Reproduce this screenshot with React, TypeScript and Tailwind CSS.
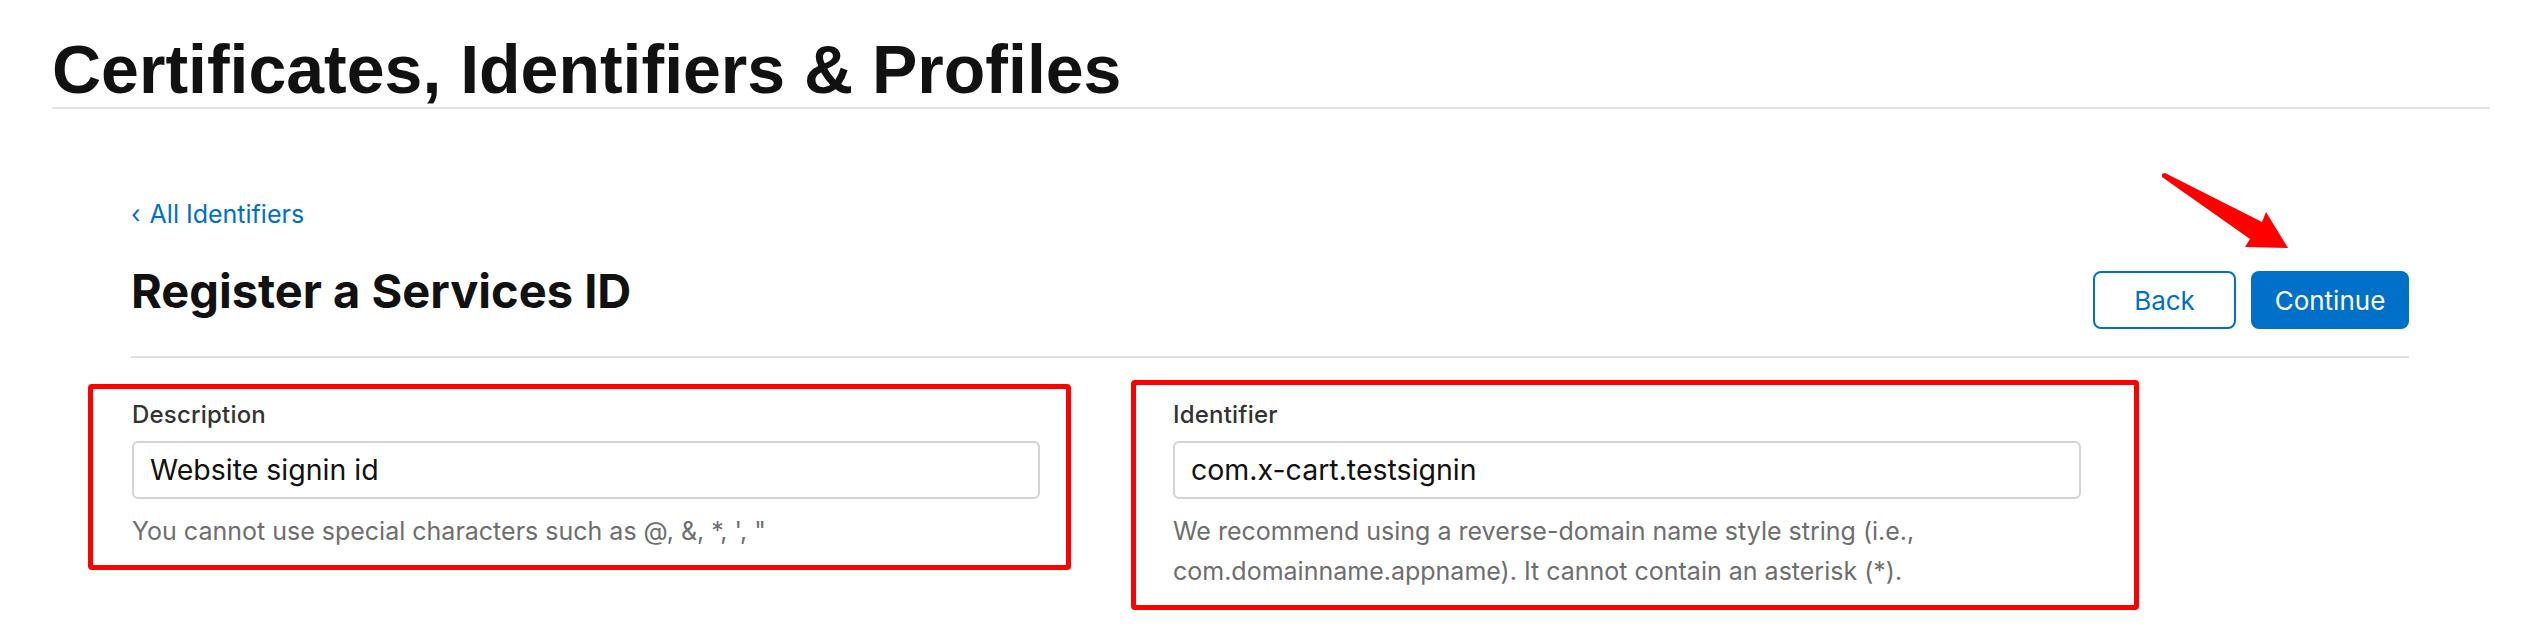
export default function App() {
  return (
    <div className="relative w-[2538px] h-[644px] overflow-hidden bg-white text-[#111111] font-['Inter','Liberation_Sans',sans-serif]">
      <header className="pl-[52px] pr-[48px] pt-[35px]">
        <h1 className="font-['Liberation_Sans',Arial,sans-serif] text-[68px] leading-[68px] font-bold text-[#111111]">
          Certificates, Identifiers &amp; Profiles
        </h1>
        <div className="mt-[4px] h-[2px] bg-[#e3e3e3]" />
      </header>

      <main className="pl-[131px] pr-[129px]">
        <a href="#" className="mt-[93px] flex items-center gap-[9px] text-[25px] leading-[25px] text-[#0070c9]">
          <span>‹</span>
          <span>All Identifiers</span>
        </a>

        <div className="mt-[40px] flex items-start justify-between">
          <h2 className="text-[47px] leading-[47px] font-bold text-[#111111]">Register a Services ID</h2>
          <div className="mt-[4px] flex gap-[15px]">
            <button className="w-[143px] h-[58px] rounded-[8px] border-2 border-[#0070c9] bg-white text-[26px] text-[#0070c9]">
              Back
            </button>
            <button className="w-[158px] h-[58px] rounded-[8px] bg-[#0070c9] text-[26px] text-white">
              Continue
            </button>
          </div>
        </div>

        <div className="mt-[27px] h-[2px] bg-[#e0e0e0]" />

        <div className="mt-[45px] pl-[1px] flex items-start gap-[133px]">
          <Field
            label="Description"
            value="Website signin id"
            help={["You cannot use special characters such as @, &, *, ', \""]}
            box="left-[-44px] right-[-31px] top-[-19px] bottom-[-19px]"
          />
          <Field
            label="Identifier"
            value="com.x-cart.testsignin"
            help={[
              "We recommend using a reverse-domain name style string (i.e.,",
              "com.domainname.appname). It cannot contain an asterisk (*).",
            ]}
            box="left-[-42px] right-[-58px] top-[-23px] bottom-[-19px]"
          />
        </div>
      </main>

      {/* annotation arrow */}
      <svg className="pointer-events-none absolute inset-0" width="2538" height="644" viewBox="0 0 2538 644">
        <polygon
          points="2162,174 2165,173 2262,222 2266,212 2288,248 2245,247 2250,239 2162,177"
          fill="#ff0000"
        />
      </svg>
    </div>
  );
}

function Field({ label, value, help, box }: { label: string; value: string; help: string[]; box: string }) {
  return (
    <div className="relative w-[908px]">
      <div className="text-[24px] leading-[24px] font-medium tracking-[0.2px] text-[#333333]">{label}</div>
      <div className="mt-[14px] h-[58px] rounded-[6px] border-2 border-[#d4d4d4] pl-[16px] flex items-center text-[28.5px] text-[#111111]">
        {value}
      </div>
      <div className="mt-[12px] text-[25px] leading-[40px] text-[#6e6e6e]">
        {help.map((l, i) => (
          <div key={i}>{l}</div>
        ))}
      </div>
      <div className={`pointer-events-none absolute rounded-[4px] border-[5px] border-[#ff0000] ${box}`} />
    </div>
  );
}
